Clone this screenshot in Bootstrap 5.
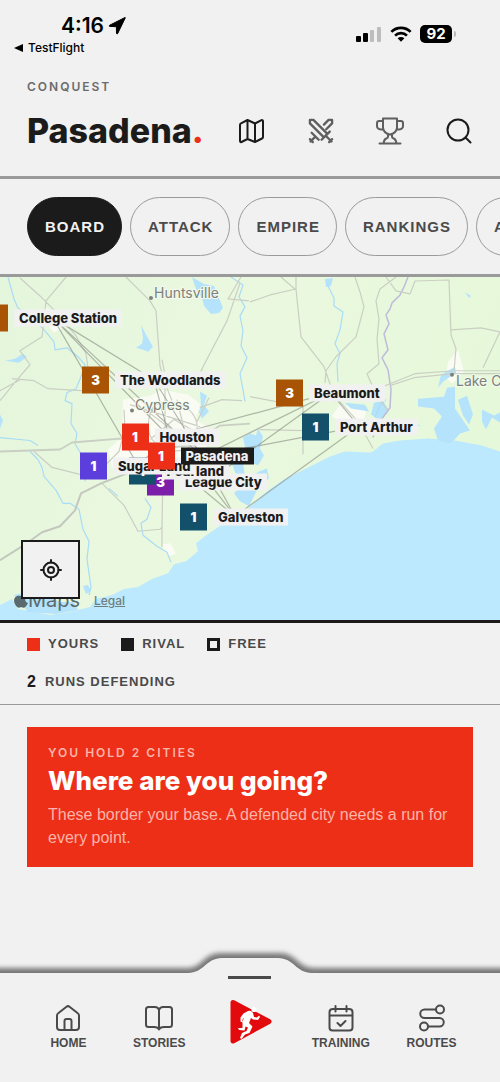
<!DOCTYPE html>
<html lang="en">
<head>
<meta charset="utf-8">
<meta name="viewport" content="width=device-width, initial-scale=1">
<title>Conquest – Pasadena</title>
<link href="https://cdn.jsdelivr.net/npm/bootstrap@5.3.0/dist/css/bootstrap.min.css" rel="stylesheet">
<style>
  :root { --ink:#1c1b1b; --paper:#f1f1f1; --ember:#ed2f17; --rule:#9a9a9a; --soft:#4a4a4a; }
  body { background:var(--paper); color:var(--ink); font-family:"Liberation Sans",Arial,sans-serif; overflow-x:hidden; }
  svg { display:block; flex:none; }
  .stroke-icon { fill:none; stroke:currentColor; stroke-width:2; stroke-linecap:round; stroke-linejoin:round; }
  .gutter { padding-left:27px; padding-right:27px; }
  .statusbar { font-family:Inter,sans-serif; color:#000; padding:12px 44px 0 14px; height:60px; }
  .clock { font-size:21px; line-height:28px; font-weight:600; padding-left:47px; }
  .back-link { font-size:12px; line-height:16px; font-weight:500; color:#000; }
  .battery { background:#000; color:#fff; font-size:15px; line-height:18px; font-weight:700; border-radius:5px; width:32px; text-align:center; }
  .battery-tip { width:2px; height:6px; margin-left:2px; border-radius:0 3px 3px 0; background:#b9b9b9; }
  .eyebrow { font-family:Inter,sans-serif; font-size:12px; line-height:16px; letter-spacing:2px; font-weight:600; color:#6b6b6b; }
  .app-head { padding-top:19px; padding-bottom:25px; border-bottom:3px solid var(--rule); }
  .app-title { font-family:Inter,sans-serif; font-size:34px; line-height:40px; font-weight:800; }
  .app-title span { color:var(--ember); }
  .tools { gap:41px; }
  .tool-btn { width:28px; height:28px; color:var(--ink); }
  .tool-btn.dim { color:#5f5f5f; }
  .tabs-row { padding:18px 0 18px 27px; border-bottom:3px solid var(--rule); overflow:hidden; }
  .pill { height:59px; padding:0 16px 0 17px; border:1px solid var(--rule); border-radius:30px; font-size:15px; line-height:20px; font-weight:700; letter-spacing:1px; color:var(--soft); background:transparent; flex:none; }
  .pill.on { background:var(--ink); border-color:var(--ink); color:var(--paper); }
  .board-map { height:346px; border-bottom:3px solid var(--ink); background:#bce9fd; overflow:hidden; }
  .board-map > svg { width:100%; height:100%; }
  .pin { position:absolute; display:flex; align-items:center; gap:6px; transform:translateY(-50%); border:0; padding:0; background:none; white-space:nowrap; font-family:Inter,sans-serif; font-weight:800; }
  .pin b { width:27px; height:27px; line-height:27px; font-size:13px; color:#fff; text-align:center; background:var(--c); }
  .pin span { font-size:13px; line-height:17px; padding:0 5px; background:var(--paper); color:var(--ink); }
  .pin.base span { background:var(--ink); color:var(--paper); }
  .locate { position:absolute; left:21px; bottom:21px; width:59px; height:59px; background:var(--paper); border:2px solid var(--ink); color:var(--ink); }
  .map-credit { position:absolute; left:14px; bottom:8px; font-family:Inter,sans-serif; font-size:20px; line-height:24px; color:#5a6b70; }
  .map-legal { position:absolute; left:94px; bottom:11px; font-family:Inter,sans-serif; font-size:12px; line-height:16px; font-weight:500; color:#6d7d80; }
  .legend { padding-top:13px; padding-bottom:14px; border-bottom:1px solid var(--rule); font-size:13px; line-height:16px; font-weight:700; letter-spacing:1px; color:var(--soft); }
  .legend-keys { gap:22px; margin-bottom:22px; }
  .swatch { width:13px; height:13px; background:var(--ink); }
  .swatch.yours { background:var(--ember); }
  .swatch.free { background:none; border:3px solid var(--ink); }
  .legend strong { font-size:16px; color:var(--ink); }
  .hold { background:var(--ember); margin-top:22px; padding:18px 21px; color:#fff; }
  .hold .eyebrow, .hold p { color:#fbb4a9; }
  .hold h2 { font-family:Inter,sans-serif; font-size:26px; line-height:34px; font-weight:800; margin:3px 0 5px; }
  .hold p { font-size:16px; line-height:23px; margin:0; }
  .dock { position:sticky; bottom:0; height:134px; margin-top:auto; padding:0 23px; }
  .dock-shape { position:absolute; left:0; top:0; width:100%; height:134px; overflow:visible; pointer-events:none; }
  .dock-item { color:var(--soft); font-size:12px; line-height:14px; font-weight:700; text-decoration:none; padding-top:56px; }
  .dock-run { padding-top:28px; }
  .handle { width:43px; height:3px; background:var(--soft); margin-bottom:18px; }
</style>
</head>
<body class="d-flex flex-column min-vh-100">
<div class="statusbar d-flex justify-content-between">
  <div>
    <div class="clock d-flex align-items-center gap-1">4:16
      <svg width="18" height="18" viewBox="0 0 18 18"><path d="M17.300 .800 9.700 16.500q-.8 1.300-1.200-.2L8.400 9.700 1.900 9.400Q.3 9 1.700 8.200L16 1Q17.700 0 17.300.8Z" stroke="#000"/></svg>
    </div>
    <a class="back-link d-flex align-items-center gap-1 text-decoration-none" href="#"><svg width="10" height="8" viewBox="0 0 10 8"><path d="M0 4 9 0v8z"/></svg>TestFlight</a>
  </div>
  <div class="d-flex align-items-center pb-1">
    <svg width="26" height="16" viewBox="0 0 26 16"><rect y="10" width="5" height="6" rx="1"/><rect x="7" y="7" width="5" height="9" rx="1"/><path fill="#bdbdbd" d="M15 4h2q1 0 1 1v10q0 1-1 1h-2q-1 0-1-1V5q0-1 1-1ZM22 1h2q1 0 1 1v13q0 1-1 1h-2q-1 0-1-1V2q0-1 1-1Z"/></svg>
    <svg class="ms-2 me-2" width="22" height="16" viewBox="0 0 24 17" fill="none" stroke="#000" stroke-width="3"><path d="M1.500 6.200a15 15 0 0 1 21 0M5.500 10.300a9.200 9.200 0 0 1 13 0"/><path fill="#000" stroke="none" d="M12 17 8.300 13.200a5.300 5.300 0 0 1 7.400 0z"/></svg>
    <div class="battery">92</div><div class="battery-tip"></div>
  </div>
</div>

<header class="app-head gutter">
  <div class="eyebrow mb-3">CONQUEST</div>
  <div class="d-flex align-items-center justify-content-between">
    <h1 class="app-title m-0">Pasadena<span>.</span></h1>
    <div class="tools d-flex align-items-center">
      <button class="btn p-0 border-0 tool-btn" aria-label="Map"><svg class="stroke-icon" width="28" height="28" viewBox="0 0 28 28"><path d="M2 8Q2 6.800 3 6.300L9.500 3 17 6.500 23.500 3.200Q25 2.800 25 4.200V20Q25 21 24 21.500L17 25 9.500 22 3.500 25Q2 25.500 2 24ZM9.500 3V22M17 6.500V25"/></svg></button>
      <button class="btn p-0 border-0 tool-btn dim" aria-label="Attacks"><svg class="stroke-icon" width="28" height="28" viewBox="0 0 24 24"><path d="M14.500 17.500 2.500 5.500V2.500H5.500L17.500 14.500ZM12.500 19.500 19.500 12.500M16.500 16.500 21 21M19 21.500 21.500 19M14.500 6.500 18.500 2.500H21.500V5.500L16.500 10.500M4 13.500 10 19.500M7 17 3 21M2.500 19 5 21.500"/></svg></button>
      <button class="btn p-0 border-0 tool-btn dim" aria-label="Trophies"><svg class="stroke-icon" width="28" height="28" viewBox="0 0 28 28"><path d="M7 1.500H21V11Q20 16.500 14 17.500 8 16.500 7 11ZM7 4H3.200Q1 4 1 6.200V9q0 3 4 3.500h2.500M21 4h3.800Q27 4 27 6.200V9q0 3-4 3.500h-2.500M12 17.500v2.200q0 1.300-1.800 1.800Q8 22.500 7.500 26.500M16 17.500v2.200q0 1.300 1.800 1.800 2.200 1 2.700 5M3.500 26.500h21"/></svg></button>
      <button class="btn p-0 border-0 tool-btn" aria-label="Search"><svg class="stroke-icon" width="28" height="28" viewBox="0 0 28 28"><circle cx="13" cy="13" r="10.500"/><path d="m20.500 20.500 5 5"/></svg></button>
    </div>
  </div>
</header>

<nav class="tabs-row d-flex gap-2" aria-label="Sections">
  <button class="pill on">BOARD</button>
  <button class="pill">ATTACK</button>
  <button class="pill">EMPIRE</button>
  <button class="pill">RANKINGS</button>
  <button class="pill">ACTIVITY</button>
</nav>

<section class="board-map position-relative">
  <svg viewBox="0 277 500 344" preserveAspectRatio="none" aria-hidden="true">
    <defs><linearGradient id="land" x2="1" y2=".3"><stop stop-color="#e4f6dc"/><stop offset=".5" stop-color="#eaf8df"/><stop offset="1" stop-color="#e6f8da"/></linearGradient></defs>
    <path fill="url(#land)" d="M0 277H500V452L482 446 455 441 428 439 400 441 383 444 373 452 370 453 345 452 330 457 304 470 284 480 268 491 256 502 247 510 237 517 218 528 205 537 196 544 198 552 186 562 174 565 168 574 152 580 138 588 124 590 112 596 96 600 90 608 70 613 50 616 30 612 18 610 12 600 0 606Z"/>
    <path fill="#fdfdf8" opacity=".85" d="M123 400 150 396 162 390 188 395 200 404 196 420 210 430 204 460 180 480 160 478 140 470 112 468 108 450 122 438ZM340 405 366 410 364 424 345 430 332 416ZM448 362l10-12 6 22-12 12-6-6ZM44 307l12 6 8 14-10 6-10-12ZM162 545l8-1 6 10-6 3-6-5Z"/>
    <g fill="#b5e3fb">
      <path d="M192 277l12 7 10 2 5 12 4 10-4 5-8 1-7-8-2-8-6-9zM141 325l5 10 3 5 4 7-5 5-5-2-7-2 6-4 1-6zM5 361l10-2 8-5 4 3-8 6zM200 392l7 4-3 9 5 7-7 7-3-6 2-8zM243 438l7-4 6 2 2-7 5 8-3 12 4 7-6 10-8-4-4-10zM231 462l12 2 2 12-8 2zM247 480l12-8 8-3 2 10-10 8-10 20-9-5-6-8 6-6zM0 415l3 6-3 8zM14 596l14-3 16 2 16 8 14 0 4 8-22 4-28-2zM83 587l5-1 3 6-5 3zM325 279l8-1-2 8-5 1zM374 403l9-2 6 10-9 10-9-6zM345 403l20 2 4 7-18-3zM418 399l26-2 3-9 8-1 0 22 15 22-10 3-9 10-13-3-4-12 8-12-8-8-16-2zM438 388l3-13 14-8 1 6-13 9zM458 400l9-4 6 19-4 10-6-9zM392 428l20-6 8 4-15 5zM482 410l12 6 6-3v10l-8-5-6 12-4-8zM465 292l6 4-2 2z"/>
    </g>
    <g fill="none" stroke="#a9dcf5" stroke-width="1.200" stroke-linejoin="round">
      <path d="M8 277l6 22 4 9 13 9 14 14 9 11 1 8 12-2 12 10 6 7-4 12-5 12-9 4-2 8 7 3-1 20 6 10-2 10 8 14 4 12-2 12"/>
      <path d="M30 452l8 8 4 8 2 9 12 14 7 13 7 0 9 6 4 20 6 12-2 18 4 28-2 8M0 438l30 3 8 5M231 277l12 8-4 12 6 10-5 9 3 15-2 15 6 12-7 16 3 16 2 12M328 286l6 12 0 8 9 6-3 18-5 14 5 10-3 10 1 18M145 499l6 9-4 12-6 4 2 12 14 11 10 6 4 10M118 497l-9-8M375 418l5-12 6-6"/>
    </g>
    <path fill="none" stroke="#bebbd8" stroke-width="1.500" d="M408 277l-4 10-4 8-8 8-2 6-4 6 3 9-5 10 4 16-6 8 6 12 3 20-1 18-13 18-4 12"/>
    <g fill="none" stroke="#cacfc3" stroke-width="1.200" stroke-linejoin="round">
      <path d="M20 278l20 18 14 14 22 26 10 18 2 14M66 277l-20 24-4 36-22 14 10 14-12 14-18 22M12 379l22 2 14 8 34 2M0 391l20-11M126 277l24 24 6 10 4 55 4 15 8 20M241 277l-13 22 21 2M240 283l-13 38-24 46-6 14M250 302l20-7 26-6 0-12M296 289l2 20 3 28 23 30 7 20 4 15M281 277l15 13M355 277l5 15 4 15-8 30-20 20-10 14-1 12M396 277l-16 12-4 12 3 18-2 20 2 25-12 10 8 18 12 18M386 277l10 14 14 3 5-13 34-1 2 55 5 14-2 22M451 330l30-2 19 4-17 36M250 397l42 8M260 430l45 1 20 2M303 405v50M34 452l18 16 28 7M102 484l22 22 14 26 22-2 2-2v20M162 530l1-65M200 408l22-8 20 1M124 410l1 20-6 22-12 12M130 405l70 22M196 424l13-26M165 385v70M145 410l60 45M177 400l12 50M150 440l24-20 35 20M155 405c30-8 45 10 42 30-4 24-42 20-48-2-2-12 0-20 6-28"/>
      <path d="M0 452l60-2 12-7 48-4 40 10 30-3 30-20 30-2" stroke-width="1.800"/>
      <path d="M0 561l24-15 18-13 18-6 15-16 6-17 20-10 26-10 25-12" stroke="#c3c7be" stroke-width="2"/>
      <path d="M360 396l30-12 25-10 40-3h45M390 386l24-8 40-4h46M338 400l20 22 15 27"/>
      <path d="M155 375l5 12 5-12-3-15"/>
    </g>
    <path fill="none" stroke="#858b80" stroke-width="1.200" opacity=".6" d="M53 318 154 380M53 318 169 437M53 318 138 466M53 318 202 457M154 380 169 437M154 380 202 457M169 437 331 393M202 457 331 393M202 457 359 427M331 393 359 427M331 393 208 482M202 457 235 517M180 471 235 517M208 482 235 517M235 517 359 427M169 437 138 466"/>
    <g font-family="Inter,sans-serif" font-size="14" fill="#7c8179" stroke="#f3faee" stroke-width="2" paint-order="stroke">
      <circle cx="151" cy="298" r="2" stroke="none"/><text x="154" y="298">Huntsville</text>
      <circle cx="132" cy="411" r="2" stroke="none"/><text x="135" y="410">Cypress</text>
      <circle cx="452" cy="375" r="2" stroke="none"/><text x="456" y="386">Lake Charles</text>
    </g>
  </svg>
  <div class="map-credit d-flex align-items-center"><svg width="14" height="16" viewBox="0 0 14 16" fill="currentColor"><path d="M7 4C9 3 11 3 13 5 10 7 11 10 14 11 12 15 10 17 7 15 4 17 1 14 0 9 0 4 4 3 7 4ZM7 3Q7 0 10 0 10 3 7 3Z"/></svg>Maps</div>
  <a class="map-legal" href="#">Legal</a>

  <button class="pin" style="left:-3.8%;top:11.900%;--c:#a85404"><b>3</b><span>College Station</span></button>
  <button class="pin" style="left:16.400%;top:29.900%;--c:#a85404"><b>3</b><span>The Woodlands</span></button>
  <button class="pin" style="left:55.200%;top:33.700%;--c:#a85404"><b>3</b><span>Beaumont</span></button>
  <button class="pin" style="left:60.400%;top:43.700%;--c:#13506a"><b>1</b><span>Port Arthur</span></button>
  <button class="pin" style="left:36%;top:69.900%;--c:#13506a"><b>1</b><span>Galveston</span></button>
  <button class="pin" style="left:29.400%;top:59.700%;--c:#7b1fa8"><b>3</b><span>League City</span></button>
  <button class="pin" style="left:25.700%;top:56.600%;--c:#13506a"><b>1</b><span>Pearland</span></button>
  <button class="pin" style="left:16%;top:55%;--c:#5b3edb"><b>1</b><span>Sugar Land</span></button>
  <button class="pin" style="left:24.300%;top:46.600%;--c:#ed2f17"><b>1</b><span>Houston</span></button>
  <button class="pin base" style="left:29.500%;top:52.300%;--c:#ed2f17"><b>1</b><span>Pasadena</span></button>

  <button class="locate d-flex align-items-center justify-content-center p-0" aria-label="Locate me"><svg class="stroke-icon" width="22" height="22" viewBox="0 0 22 22"><circle cx="11" cy="11" r="7.500"/><circle cx="11" cy="11" r="3"/><path d="M11 1v2.500M11 18.500V21M1 11h2.500M18.500 11H21"/></svg></button>
</section>

<section class="legend gutter">
  <div class="legend-keys d-flex">
    <div class="d-flex align-items-center gap-2"><i class="swatch yours"></i>YOURS</div>
    <div class="d-flex align-items-center gap-2"><i class="swatch"></i>RIVAL</div>
    <div class="d-flex align-items-center gap-2"><i class="swatch free"></i>FREE</div>
  </div>
  <div class="d-flex align-items-center gap-2"><strong>2</strong>RUNS DEFENDING</div>
</section>

<main class="gutter pb-4">
  <div class="hold">
    <div class="eyebrow">YOU HOLD 2 CITIES</div>
    <h2>Where are you going?</h2>
    <p>These border your base. A defended city needs a run for every point.</p>
  </div>
</main>

<nav class="dock" aria-label="Main">
  <svg class="dock-shape" viewBox="0 0 500 134" preserveAspectRatio="xMidYMin meet" aria-hidden="true">
    <defs><filter id="soft" filterUnits="userSpaceOnUse" x="-1500" y="-20" width="3500" height="170"><feGaussianBlur stdDeviation="2.500"/></filter></defs>
    <path filter="url(#soft)" fill="#777" d="M-1500 20H188C202 20 204 5 220 5H280C296 5 298 20 314 20H2000V134H-1500Z"/>
    <path fill="#f1f1f1" d="M-1500 25H188C204 25 206 10 222 10H278C294 10 296 25 312 25H2000V150H-1500Z"/>
  </svg>
  <div class="row g-0 position-relative text-center">
    <a class="col dock-item d-flex flex-column align-items-center gap-1" href="#"><svg class="stroke-icon" width="28" height="28" viewBox="0 0 28 28"><path d="M3 11.500Q3 10 4.500 9L12.500 2.700Q14 1.500 15.500 2.700L23.500 9Q25 10 25 11.500V23Q25 26 22 26H6Q3 26 3 23ZM10.500 26V17q0-2 2-2h3q2 0 2 2v9"/></svg>HOME</a>
    <a class="col dock-item d-flex flex-column align-items-center gap-1" href="#"><svg class="stroke-icon" width="28" height="28" viewBox="0 0 28 28"><path d="M14 6Q13 3 10 3H3.500Q1 3 1 5.500V20.500Q1 23 3.500 23H9Q13 23 14 25.500 15 23 19 23H24.500Q27 23 27 20.500V5.500Q27 3 24.500 3H18Q15 3 14 6ZM14 6V25"/></svg>STORIES</a>
    <a class="col dock-run d-flex flex-column align-items-center" href="#" aria-label="Run"><span class="handle"></span><svg width="44" height="48" viewBox="0 0 44 48"><path fill="#e30a0d" stroke="#e30a0d" stroke-width="5" stroke-linejoin="round" d="M5 5.500 41 24.500 5 44Z"/><g fill="#fff"><circle cx="26" cy="12.500" r="2.600"/><path d="M20 14Q23 13 25 16L26 20 29 20.500 31 18.500 32 20 30 23 25 22.500 23 21 21 26 24.500 29.500 21.500 36 17 37.500 13.500 42 12 41 14 36 18.500 34 20 30.500 17.500 29.500 16.500 33.500 11 33 10 31 14.500 31 14.500 25 16 20.500 14.500 22.500 14.500 25.500 12.500 24.500 12.500 20.500 15.500 16.500Z"/></g></svg></a>
    <a class="col dock-item d-flex flex-column align-items-center gap-1" href="#"><svg class="stroke-icon" width="28" height="28" viewBox="0 0 28 28"><path d="M6 5H22Q25.500 5 25.500 8V23.500Q25.500 26.500 22.500 26.500H5.500Q2.500 26.500 2.500 23.500V8Q2.500 5 6 5ZM2.500 11.500h23M8.500 2v5.500M19.500 2v5.500M10.500 19l3 3 5-5"/></svg>TRAINING</a>
    <a class="col dock-item d-flex flex-column align-items-center gap-1" href="#"><svg class="stroke-icon" width="28" height="28" viewBox="0 0 28 28"><circle cx="22" cy="5.500" r="4"/><circle cx="6" cy="22.500" r="4"/><path d="M18 5.500H6.500a4.200 4.200 0 0 0 0 8.500h15a4.200 4.200 0 0 1 0 8.500H10"/></svg>ROUTES</a>
  </div>
</nav>
<script src="https://cdn.jsdelivr.net/npm/bootstrap@5.3.0/dist/js/bootstrap.bundle.min.js"></script>
</body>
</html>
